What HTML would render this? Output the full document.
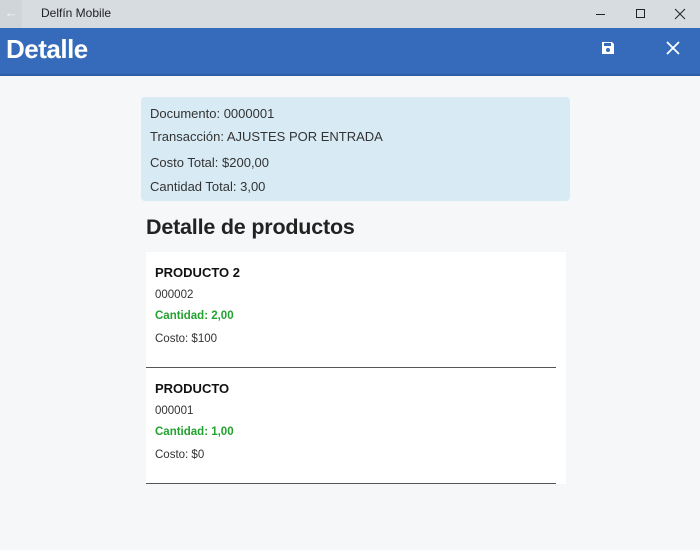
<!DOCTYPE html>
<html><head><meta charset="utf-8"><style>
*{margin:0;padding:0;box-sizing:border-box}
body{width:700px;height:550px;background:#f6f7f9;font-family:"Segoe UI","Liberation Sans",sans-serif;position:relative;overflow:hidden;color:#222}
.tb{position:absolute;left:0;top:0;width:700px;height:28px;background:#d7dce1}
.back{position:absolute;left:0;top:0;width:22px;height:28px;background:#d0d5da;color:#f4f4f4;font-size:13px;text-align:center;line-height:26px}
.tt{position:absolute;left:41px;top:6px;font-size:12px;color:#222}
.hd{position:absolute;left:0;top:28px;width:700px;height:48px;background:#356bba;border-bottom:2px solid #2d5ea6}
.hd h1{position:absolute;left:6px;top:6px;color:#fff;font-size:26px;font-weight:bold;letter-spacing:-0.5px}
.info{position:absolute;left:141px;top:97px;width:429px;height:104px;background:#d8ebf5;border-radius:4px;font-size:13px;color:#333}
.info div{position:absolute;left:9px}
h2{position:absolute;left:146px;top:215px;font-size:21.5px;font-weight:bold;color:#222;letter-spacing:-0.2px}
.card{position:absolute;left:146px;top:252px;width:420px;height:232px;background:#fff}
.p{position:absolute;left:9px;font-size:11.5px;color:#333}
.n{font-size:13px;font-weight:bold;color:#111}
.g{color:#22a22e;font-weight:bold}
.ln{position:absolute;left:0;width:410px;height:1px;background:#555}
</style></head><body>
<div class="tb"><div class="back">←</div><div class="tt">Delfín Mobile</div>
<svg style="position:absolute;left:590px;top:8px" width="100" height="12" stroke="#222" fill="none" stroke-width="1"><line x1="6" y1="6.5" x2="15" y2="6.5"/><rect x="46.5" y="1.5" width="8" height="8"/><path d="M85 1l10 10M95 1L85 11"/></svg></div>
<div class="hd"><h1>Detalle</h1>
<svg style="position:absolute;left:601px;top:13px" width="14" height="14" viewBox="0 0 14 14"><path d="M1 1h10l2 2v10H1z" fill="#fff"/><rect x="3" y="2" width="7" height="3" fill="#356bba"/><circle cx="7" cy="9" r="2" fill="#356bba"/></svg>
<svg style="position:absolute;left:666px;top:13px" width="14" height="14" stroke="#fff" stroke-width="1.8"><path d="M1 1l12 12M13 1L1 13"/></svg></div>
<div class="info">
<div style="top:9px">Documento: 0000001</div>
<div style="top:32px">Transacción: AJUSTES POR ENTRADA</div>
<div style="top:58px">Costo Total: $200,00</div>
<div style="top:82px">Cantidad Total: 3,00</div></div>
<h2>Detalle de productos</h2>
<div class="card">
<div class="p n" style="top:13px">PRODUCTO 2</div>
<div class="p" style="top:37px">000002</div>
<div class="p g" style="top:58px">Cantidad: 2,00</div>
<div class="p" style="top:81px">Costo: $100</div>
<div class="ln" style="top:115px"></div>
<div class="p n" style="top:129px">PRODUCTO</div>
<div class="p" style="top:153px">000001</div>
<div class="p g" style="top:174px">Cantidad: 1,00</div>
<div class="p" style="top:197px">Costo: $0</div>
<div class="ln" style="top:231px"></div>
</div>
</body></html>
